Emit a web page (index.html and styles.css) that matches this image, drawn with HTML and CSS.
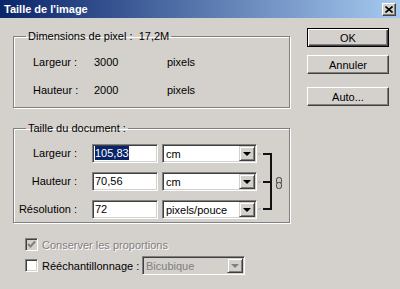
FILE: index.html
```html
<!DOCTYPE html>
<html lang="fr">
<head>
    <meta charset="UTF-8">
    <title>Taille de l'image</title>
    <link rel="stylesheet" href="styles.css">
</head>
<body>
    <div class="dialog">
        <div class="titlebar">
            <span class="title">Taille de l'image</span>
            <span class="close">
                <svg width="8" height="7" viewBox="0 0 8 7">
                    <path d="M0.5 0.5 L7.5 6.5 M7.5 0.5 L0.5 6.5" stroke="#000" stroke-width="1.6" fill="none"/>
                </svg>
            </span>
        </div>

        <div class="body">
            <div class="main">
                <fieldset class="group">
                    <legend>Dimensions de pixel :&nbsp;&nbsp;17,2M</legend>
                    <div class="pixel-grid">
                        <span>Largeur :</span><span>3000</span><span>pixels</span>
                        <span>Hauteur :</span><span>2000</span><span>pixels</span>
                    </div>
                </fieldset>

                <fieldset class="group">
                    <legend>Taille du document :</legend>
                    <div class="doc-grid">
                        <span class="label">Largeur :</span>
                        <div class="field"><span class="selected">105,83</span></div>
                        <div class="combo"><span>cm</span><span class="arrow"></span></div>

                        <svg class="link" width="32" height="75" viewBox="0 0 32 75">
                            <path d="M1 10 H4 M1 38 H4 M1 65 H4" stroke="#aaa" stroke-width="1" fill="none"/>
                            <path d="M6 10 H14 V65 H6 M6 38 H14" stroke="#111" stroke-width="2" fill="none"/>
                            <rect x="19.5" y="33.5" width="5" height="6" rx="2" fill="#c8c4c0" stroke="#404040"/>
                            <rect x="19.5" y="38.5" width="5" height="6" rx="2" fill="#c8c4c0" stroke="#404040"/>
                        </svg>

                        <span class="label">Hauteur :</span>
                        <div class="field">70,56</div>
                        <div class="combo"><span>cm</span><span class="arrow"></span></div>

                        <span class="label">Résolution :</span>
                        <div class="field">72</div>
                        <div class="combo"><span>pixels/pouce</span><span class="arrow"></span></div>
                    </div>
                </fieldset>

                <div class="options">
                    <div class="check-row disabled">
                        <span class="box checked">
                            <svg width="9" height="9" viewBox="0 0 9 9">
                                <path d="M1 4 L3.5 6.5 L8 1.5" stroke="#808080" stroke-width="2" fill="none"/>
                            </svg>
                        </span>
                        <span class="check-text">Conserver les proportions</span>
                    </div>
                    <div class="check-row">
                        <span class="box"></span>
                        <span class="check-text resample">Rééchantillonnage :</span>
                        <div class="combo off"><span>Bicubique</span><span class="arrow"></span></div>
                    </div>
                </div>
            </div>

            <div class="side">
                <button class="default">OK</button>
                <button class="cancel">Annuler</button>
                <button class="auto">Auto...</button>
            </div>
        </div>
    </div>
</body>
</html>
```

FILE: styles.css
```css
body {
    margin: 0;
    font-family: 'Liberation Sans', Arial, sans-serif;
    font-size: 11px;
    color: #000;
    background-color: #d4d0cc;
}

.dialog {
    width: 400px;
    height: 289px;
    background-color: #d4d0cc;
    overflow: hidden;
}

.titlebar {
    height: 18px;
    padding: 0 4px;
    display: flex;
    align-items: center;
    justify-content: space-between;
    background: linear-gradient(to right, #0a246a, #a6caf0);
}

.title {
    color: #fff;
    font-weight: bold;
    font-size: 11px;
}

.close {
    width: 14px;
    height: 13px;
    box-sizing: border-box;
    display: flex;
    align-items: center;
    justify-content: center;
    background-color: #d4d0cc;
    border: 1px solid;
    border-color: #fff #404040 #404040 #fff;
    box-shadow: inset -1px -1px 0 #808080;
}

.body {
    display: flex;
}

.main {
    width: 290px;
    padding: 12px 0 0 13px;
    box-sizing: border-box;
}

.group {
    margin: 0;
    padding: 0;
    min-width: 0;
    width: 277px;
    box-sizing: border-box;
    border: 1px solid #808080;
    box-shadow: inset 1px 1px 0 #fff, 1px 1px 0 #fff;
}

.group + .group {
    margin-top: 14px;
}

.group legend {
    margin-left: 12px;
    padding: 0 2px;
    line-height: 13px;
}

.pixel-grid {
    display: grid;
    grid-template-columns: 61px 73px auto;
    grid-auto-rows: 28px;
    align-items: center;
    padding: 5px 0 3px 19px;
}

.doc-grid {
    display: grid;
    grid-template-columns: 78px 70px 95px 32px;
    grid-auto-rows: 19px;
    row-gap: 9px;
    padding: 9px 0 3px 0;
}

.doc-grid .label {
    text-align: right;
    padding-right: 15px;
    line-height: 19px;
}

.link {
    grid-column: 4;
    grid-row: 1 / span 3;
    display: block;
}

.field,
.combo {
    height: 19px;
    box-sizing: border-box;
    background-color: #fff;
    border: 1px solid;
    border-color: #808080 #fff #fff #808080;
    box-shadow: inset 1px 1px 0 #404040, inset -1px -1px 0 #d4d0cc;
}

.field {
    width: 66px;
    padding: 0 2px;
    line-height: 17px;
}

.selected {
    background-color: #0a246a;
    color: #fff;
    padding: 1px 0;
}

.combo {
    display: flex;
    align-items: center;
    justify-content: space-between;
    padding: 1px 1px 1px 3px;
}

.arrow {
    width: 16px;
    height: 15px;
    box-sizing: border-box;
    background-color: #d4d0cc;
    border: 1px solid;
    border-color: #d4d0cc #404040 #404040 #d4d0cc;
    box-shadow: inset 1px 1px 0 #fff, inset -1px -1px 0 #808080;
    position: relative;
}

.arrow::after {
    content: '';
    position: absolute;
    left: 3px;
    top: 5px;
    border-left: 4px solid transparent;
    border-right: 4px solid transparent;
    border-top: 4px solid #000;
}

.options {
    padding: 13px 0 0 12px;
}

.check-row {
    display: flex;
    align-items: center;
    height: 17px;
}

.check-row + .check-row {
    margin-top: 3px;
    height: 19px;
}

.box {
    width: 13px;
    height: 13px;
    box-sizing: border-box;
    display: flex;
    align-items: center;
    justify-content: center;
    background-color: #fff;
    border: 1px solid;
    border-color: #808080 #fff #fff #808080;
    box-shadow: inset 1px 1px 0 #404040, inset -1px -1px 0 #d4d0cc;
}

.box.checked {
    background-color: #d4d0cc;
}

.check-text {
    margin-left: 4px;
}

.disabled .check-text {
    color: #808080;
    text-shadow: 1px 1px 0 #fff;
}

.resample {
    width: 100px;
}

.combo.off {
    width: 103px;
    background-color: #d4d0cc;
    color: #808080;
}

.combo.off .arrow::after {
    border-top-color: #808080;
}

.side {
    display: flex;
    flex-direction: column;
    padding: 10px 0 0 17px;
}

button {
    width: 82px;
    height: 19px;
    padding: 0;
    font-family: 'Liberation Sans', Arial, sans-serif;
    font-size: 11px;
    color: #000;
    background-color: #d4d0cc;
    border: 1px solid;
    border-color: #fff #404040 #404040 #fff;
    box-shadow: inset -1px -1px 0 #808080;
}

button.default {
    border: 1px solid #000;
    box-shadow: inset 1px 1px 0 #fff, inset -1px -1px 0 #404040, inset -2px -2px 0 #808080;
}

button.cancel {
    margin-top: 8px;
}

button.auto {
    margin-top: 13px;
}
```
